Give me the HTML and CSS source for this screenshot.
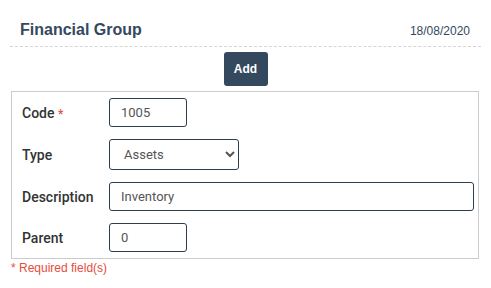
FILE: index.html
```html
<!DOCTYPE html>
<html>
<head>
<meta charset="utf-8">
<link rel="stylesheet" href="styles.css">
</head>
<body>
<div class="header">
  <h1 class="title">Financial Group</h1>
  <span class="date">18/08/2020</span>
</div>
<div class="actions">
  <button class="btn">Add</button>
</div>
<form class="panel">
  <div class="row">
    <label class="label">Code <span class="req">*</span></label>
    <input class="field short" type="text" value="1005">
  </div>
  <div class="row">
    <label class="label">Type</label>
    <select class="field select">
      <option>Assets</option>
    </select>
  </div>
  <div class="row">
    <label class="label">Description</label>
    <input class="field wide" type="text" value="Inventory">
  </div>
  <div class="row">
    <label class="label">Parent</label>
    <input class="field short" type="text" value="0">
  </div>
</form>
<div class="note">* Required field(s)</div>
</body>
</html>
```
FILE: styles.css
```css
html, body {
  margin: 0;
  padding: 0;
  background: #fff;
}
body {
  font-family: "Liberation Sans", Arial, sans-serif;
}
.header {
  margin: 0 10px;
  padding: 19px 11px 0 10px;
  height: 27px;
  display: flex;
  justify-content: space-between;
  align-items: flex-start;
  border-bottom: 1px dashed #d6d6d6;
}
.title {
  margin: 0;
  font-size: 16px;
  line-height: 22px;
  font-weight: bold;
  color: #34495e;
}
.date {
  font-size: 12px;
  line-height: 22px;
  padding-top: 1px;
  color: #34495e;
}
.actions {
  display: flex;
  justify-content: center;
  padding-top: 5px;
}
.btn {
  width: 44px;
  height: 34px;
  border: 0;
  border-radius: 3px;
  background: #34495e;
  color: #fff;
  font-family: "Liberation Sans", Arial, sans-serif;
  font-weight: bold;
  font-size: 12px;
  padding: 0;
}
.panel {
  margin: 5px 12px 0 11px;
  border: 1px solid #cccccc;
  padding: 6px 4px 6px 10px;
  display: flex;
  flex-direction: column;
  gap: 12px;
}
.row {
  display: flex;
  align-items: center;
}
.label {
  width: 87px;
  font-family: Roboto, "Liberation Sans", sans-serif;
  font-weight: 500;
  font-size: 14px;
  color: #333;
}
.req {
  color: #e74c3c;
  font-size: 12px;
}
.field {
  box-sizing: border-box;
  height: 29px;
  border: 1px solid #2c3e50;
  border-radius: 3px;
  padding: 0 11px;
  font-family: Roboto, "Liberation Sans", sans-serif;
  font-size: 13px;
  color: #555;
  background: #fff;
  outline: none;
}
.short {
  width: 78px;
}
.wide {
  flex: 1;
}
.select {
  width: 130px;
  height: 31px;
  padding: 0 10px;
}
.note {
  margin: 0 0 0 11px;
  padding-top: 2px;
  font-size: 12px;
  color: #e74c3c;
}
```
